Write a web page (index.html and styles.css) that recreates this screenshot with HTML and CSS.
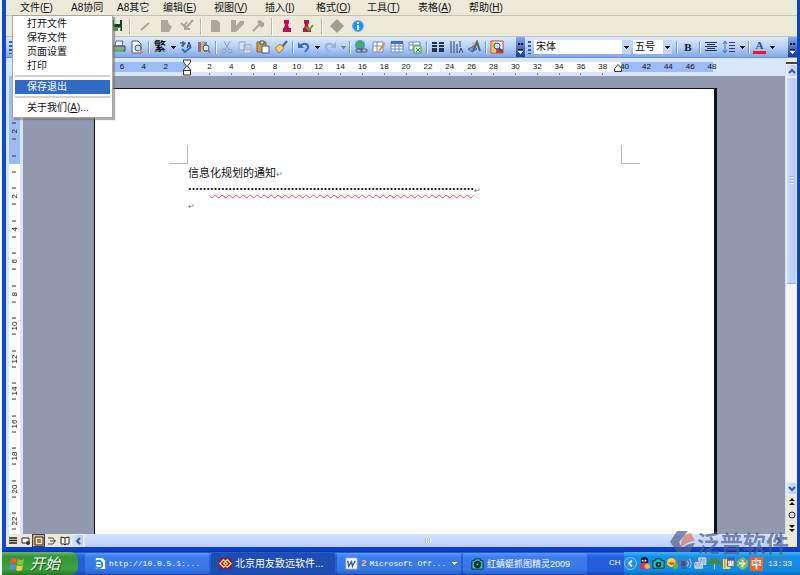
FILE: index.html
```html
<!DOCTYPE html>
<html lang="zh-CN">
<head>
<meta charset="utf-8">
<title>信息化规划的通知</title>
<link rel="stylesheet" href="styles.css">
</head>
<body>
<div class="window">
  <nav class="menubar">
    <button>文件(<u>F</u>)</button><button>A8协同</button><button>A8其它</button><button>编辑(<u>E</u>)</button><button>视图(<u>V</u>)</button><button>插入(<u>I</u>)</button><button>格式(<u>O</u>)</button><button>工具(<u>T</u>)</button><button>表格(<u>A</u>)</button><button>帮助(<u>H</u>)</button>
  </nav>
  <div class="dropdown">
    <button>打开文件</button>
    <button>保存文件</button>
    <button>页面设置</button>
    <button>打印</button>
    <hr>
    <button class="selected">保存退出</button>
    <hr>
    <button>关于我们(<u>A</u>)...</button>
  </div>

  <div class="toolbar gray-tools">
    <button aria-label="保存"><svg viewBox="0 0 14 14"><path d="M2 1h11v11H2z" fill="#173d22"/><path d="M5 1h6v4H5z" fill="#dbe8d8"/><path d="M4 8h8v4H4z" fill="#3c9950"/><path d="M9 9h2v3H9z" fill="#fff"/></svg></button>
    <i class="sep"></i>
    <button aria-label="画线"><svg viewBox="0 0 14 14"><path d="M3 11l8-7" stroke="#aaa698" stroke-width="2"/></svg></button>
    <button aria-label="文档"><svg viewBox="0 0 14 14"><path d="M2 1h7v3l4 4-3 5H2z" fill="#aaa698"/></svg></button>
    <button aria-label="修订"><svg viewBox="0 0 14 14"><path d="M13 1L6 9M5 6v4h5M1 4l3 3 3-4" fill="none" stroke="#aaa698" stroke-width="2"/></svg></button>
    <i class="sep"></i>
    <button aria-label="新建"><svg viewBox="0 0 14 14"><path d="M2 1h6l3 3v9H2z" fill="#aaa698"/></svg></button>
    <button aria-label="批注"><svg viewBox="0 0 14 14"><path d="M1 1h5v6l4-5h4v3L6 13H1z" fill="#aaa698"/></svg></button>
    <button aria-label="签名"><svg viewBox="0 0 14 14"><path d="M2 12l7-7" stroke="#aaa698" stroke-width="2"/><path d="M6 2l3-1 4 3v3l-3 2z" fill="#aaa698"/></svg></button>
    <i class="sep"></i>
    <button aria-label="盖章"><svg viewBox="0 0 14 14"><path d="M4 1h5v3L8 6l1 3h2v4H3V9h1l1-3-1-2z" fill="#c20c50"/></svg></button>
    <button aria-label="验章"><svg viewBox="0 0 14 14"><path d="M3 1h5v3L7 6l1 3h2v4H2V9h1l1-3-1-2z" fill="#c20c50"/><path d="M5 8l3 3 4-5" fill="none" stroke="#45b820" stroke-width="2"/></svg></button>
    <i class="sep"></i>
    <button aria-label="标记"><svg viewBox="0 0 14 14"><path d="M7 0l7 7-7 7-7-7z" fill="#a19d8f"/></svg></button>
    <button aria-label="信息"><svg viewBox="0 0 14 14"><circle cx="7" cy="7" r="5.500" fill="#1f91ee" stroke="#70b9f5"/><path d="M6 6h2v5H6zM6 3h2v2H6z" fill="#fff"/></svg></button>
  </div>

  <div class="toolbar blue-tools">
    <i class="grip"></i>
    <div class="tools">
      <button aria-label="打印"><svg viewBox="0 0 14 14"><path d="M4 1h7l-1 5H3z" fill="#fff" stroke="#667"/><path d="M1 6h12v5H1z" fill="#8fa0b8" stroke="#445"/><path d="M3 9h8v3H3z" fill="#5dbb55"/></svg></button>
      <button aria-label="打印预览"><svg viewBox="0 0 14 14"><path d="M2 1h6l3 3v9H2z" fill="#fff" stroke="#557"/><circle cx="8" cy="8" r="3" fill="#b9e1f7" stroke="#456"/><path d="M10 10l3 3" stroke="#d8942e" stroke-width="2"/></svg></button>
      <i class="sep"></i>
      <button class="glyph heavy">繁</button><i class="caret"></i>
      <button aria-label="拼写"><svg viewBox="0 0 14 14"><path d="M1 3h6M4 1v6M2 6l4-2M8 8l2-6 2 6M9 6h3" fill="none" stroke="#223c77"/><path d="M3 9l3 3 6-5" fill="none" stroke="#3568cc" stroke-width="2"/></svg></button>
      <button aria-label="信息检索"><svg viewBox="0 0 14 14"><path d="M1 2h3v10H1z" fill="#8a65b8"/><path d="M4 1h3v11H4z" fill="#e0b84a"/><path d="M7 2h3v10H7z" fill="#6f86ca"/><circle cx="9" cy="8" r="3" fill="#d6e9f8" stroke="#456"/><path d="M11 10l2 3" stroke="#b86c32" stroke-width="2"/></svg></button>
      <i class="sep"></i>
      <button aria-label="剪切"><svg viewBox="0 0 14 14"><path d="M4 1l5 9M10 1L5 10" stroke="#8b9cc0"/><circle cx="4" cy="11" r="2" fill="none" stroke="#8b9cc0"/><circle cx="10" cy="11" r="2" fill="none" stroke="#8b9cc0"/></svg></button>
      <button aria-label="复制"><svg viewBox="0 0 14 14"><path d="M1 2h6v8H1zM6 5h7v8H6z" fill="#d7e2f5" stroke="#93a5cb"/><path d="M8 8h4M8 10h4" stroke="#93a5cb"/></svg></button>
      <button aria-label="粘贴"><svg viewBox="0 0 14 14"><path d="M1 2h9v10H1z" fill="#d99c35" stroke="#84602c"/><path d="M4 1h4v3H4z" fill="#ddd" stroke="#555"/><path d="M6 6h7v7H6z" fill="#fff" stroke="#345a9d"/></svg></button>
      <button aria-label="格式刷"><svg viewBox="0 0 14 14"><path d="M13 1L8 7" stroke="#56618b" stroke-width="2"/><path d="M6 4l4 4-5 5-4-5z" fill="#f4d568" stroke="#a78437"/></svg></button>
      <i class="sep"></i>
      <button aria-label="撤销"><svg viewBox="0 0 14 14"><path d="M3 6c4-4 9-2 8 2l-3 4" fill="none" stroke="#326ad0" stroke-width="2"/><path d="M1 2v6h6z" fill="#326ad0"/></svg></button><i class="caret"></i>
      <button aria-label="重做"><svg viewBox="0 0 14 14"><path d="M11 6C7 2 2 4 3 8l3 4" fill="none" stroke="#9cb0d7" stroke-width="2"/><path d="M13 2v6H7z" fill="#9cb0d7"/></svg></button><i class="caret dim"></i>
      <i class="sep"></i>
      <button aria-label="超链接"><svg viewBox="0 0 14 14"><circle cx="6" cy="5" r="5" fill="#3f9acb"/><path d="M3 2l4-1 2 3-3 4-2-1z" fill="#50ad42"/><rect x="2" y="9" width="6" height="3" rx="1" fill="none" stroke="#556"/><rect x="7" y="9" width="6" height="3" rx="1" fill="none" stroke="#556"/></svg></button>
      <button aria-label="表格和边框"><svg viewBox="0 0 14 14"><path d="M1 2h10v10H1zM1 6h10M5 2v10" fill="#fff" stroke="#7a86a8"/><path d="M13 3l-6 8" stroke="#d69a25" stroke-width="2"/></svg></button>
      <button aria-label="插入表格"><svg viewBox="0 0 14 14"><path d="M1 2h12v10H1zM1 6h12M1 9h12M5 3v9M9 3v9" fill="#fff" stroke="#698bc5"/><path d="M1 1h12v3H1z" fill="#3f70c2"/></svg></button>
      <button aria-label="插入工作表"><svg viewBox="0 0 14 14"><path d="M1 2h11v8H1zM1 5h11M5 2v8" fill="#fff" stroke="#698bc5"/><path d="M6 6h7v7H6z" fill="#dff0dc" stroke="#4b9b48"/><path d="M8 8l4 4m0-4l-4 4" stroke="#308535"/></svg></button>
      <i class="sep"></i>
      <button aria-label="分栏"><svg viewBox="0 0 14 14"><path d="M1 3h5M8 3h5M1 6h5M8 6h5M1 9h5M8 9h5M1 11h5M8 11h5" stroke="#25304c" stroke-width="2"/></svg></button>
      <button aria-label="文字方向"><svg viewBox="0 0 14 14"><path d="M2 1v12M5 1v12M8 4v9M11 1v6M10 13l2-5 2 5" fill="none" stroke="#304164"/></svg></button>
      <button aria-label="绘图"><svg viewBox="0 0 14 14"><path d="M5 2h6v6H5z" fill="#e0bd68"/><path d="M1 9l6-3 3 3-5 3z" fill="#869bce" stroke="#536492"/><path d="M6 11l4-9 3 9" fill="none" stroke="#4b5e94" stroke-width="2"/></svg></button>
      <i class="sep"></i>
      <button aria-label="文档结构图"><svg viewBox="0 0 14 14"><path d="M1 1h12v12H1z" fill="#fff" stroke="#c33a24"/><path d="M2 2h4v10H2z" fill="#f4cd31"/><path d="M6 9h7v4H6z" fill="#db3930"/><circle cx="7" cy="6" r="3" fill="#cbe3f6" stroke="#2755a1"/><path d="M9 8l3 4" stroke="#2755a1" stroke-width="2"/></svg></button>
    </div>
    <i class="cap"></i>
    <i class="grip"></i>
    <div class="format">
      <select class="family" aria-label="字体"><option>宋体</option></select>
      <select class="size" aria-label="字号"><option>五号</option></select>
      <i class="sep"></i>
      <button class="glyph bold">B</button>
      <i class="sep"></i>
      <button aria-label="居中"><svg viewBox="0 0 14 14"><path d="M1 2.500h12M3 4.500h8M1 6.500h12M3 8.500h8M1 10.500h12" stroke="#26324c"/></svg></button>
      <button aria-label="行距"><svg viewBox="0 0 14 14"><path d="M3 2v10M1 4l2-3 2 3M1 10l2 3 2-3" fill="none" stroke="#3c6fc8"/><path d="M7 2.500h6M7 5.500h6M7 8.500h6M7 11.500h6" stroke="#34415d"/></svg></button><i class="caret"></i>
      <i class="sep"></i>
      <button class="glyph color">A</button><i class="caret"></i>
    </div>
    <i class="cap"></i>
  </div>

  <div class="main">
    <div class="work">
      <div class="hruler">
        <div class="scale">
          <span>6</span><span>4</span><span>2</span>
          <span class="indent"><svg viewBox="0 0 10 17"><path d="M1.500 1h7v2l-3 4 3 4v5h-7v-5l3-4-3-4zM1.500 11.500h7" fill="#fffdf2" stroke="#333"/></svg></span>
          <span>2</span><span>4</span><span>6</span><span>8</span><span>10</span><span>12</span><span>14</span><span>16</span><span>18</span><span>20</span><span>22</span><span>24</span><span>26</span><span>28</span><span>30</span><span>32</span><span>34</span><span>36</span><span>38</span><span class="right-indent"><svg viewBox="0 0 8 8"><path d="M.5 7.500v-3l3.500-4 3.500 4v3z" fill="#fffdf2" stroke="#333"/></svg>40</span><span>42</span><span>44</span><span>46</span><span>48</span>
        </div>
      </div>
      <div class="canvas">
        <div class="vruler">
          <div class="vscale"><span>2</span><span></span><span>2</span><span>4</span><span>6</span><span>8</span><span>10</span><span>12</span><span>14</span><span>16</span><span>18</span><span>20</span><span>22</span></div>
        </div>
        <main class="page">
          <div class="crops"><i class="crop left"></i><i class="crop right"></i></div>
          <article class="text">
            <p>信息化规划的通知<span class="mark">↵</span></p>
            <p><b>……<span class="squiggle">………………………………………………………………</span></b><span class="mark">↵</span></p>
            <p><span class="mark">↵</span></p>
          </article>
        </main>
      </div>
    </div>
    <div class="vscroll">
      <i class="split"></i>
      <button class="arrow" aria-label="向上"><svg viewBox="0 0 10 10"><path d="M2 7l3-3 3 3" fill="none" stroke="#40598f" stroke-width="2"/></svg></button>
      <div class="vtrack"><i class="vthumb"></i></div>
      <button class="arrow" aria-label="向下"><svg viewBox="0 0 10 10"><path d="M2 3l3 3 3-3" fill="none" stroke="#40598f" stroke-width="2"/></svg></button>
      <button class="browse" aria-label="前一页"><svg viewBox="0 0 10 10"><path d="M5 1l3 3H2zM5 5l3 3H2z" fill="#111"/></svg></button>
      <button class="browse" aria-label="选择浏览对象"><svg viewBox="0 0 10 10"><circle cx="5" cy="5" r="3" fill="#ddd" stroke="#222"/></svg></button>
      <button class="browse" aria-label="下一页"><svg viewBox="0 0 10 10"><path d="M5 5L2 2h6zM5 9L2 6h6z" fill="#111"/></svg></button>
    </div>
  </div>

  <div class="bottom">
    <button aria-label="普通视图"><svg viewBox="0 0 10 10"><path d="M1 2h8M1 4.500h8M1 7h8" stroke="#222" stroke-width="1.500"/></svg></button>
    <button aria-label="Web 版式"><svg viewBox="0 0 10 10"><path d="M1 2h7v5H1z" fill="#fff" stroke="#222"/><circle cx="7" cy="7" r="2" fill="#333"/></svg></button>
    <button class="current" aria-label="页面视图"><svg viewBox="0 0 10 10"><path d="M1 1h8v8H1zM3 4h4M3 6h4" fill="#ffe1b0" stroke="#222"/></svg></button>
    <button aria-label="大纲视图"><svg viewBox="0 0 10 10"><path d="M1 2h5M3 5h6M1 8h5M6 2l2 3-2 3" fill="none" stroke="#444"/></svg></button>
    <button aria-label="阅读版式"><svg viewBox="0 0 10 10"><path d="M1 1l4 1 4-1v7H6L5 9 4 8H1zM5 2v6" fill="#fff" stroke="#222"/></svg></button>
    <button class="arrow" aria-label="向左"><svg viewBox="0 0 10 10"><path d="M7 2L4 5l3 3" fill="none" stroke="#40598f" stroke-width="2"/></svg></button>
    <i class="hthumb"></i>
    <button class="arrow" aria-label="向右"><svg viewBox="0 0 10 10"><path d="M3 2l3 3-3 3" fill="none" stroke="#40598f" stroke-width="2"/></svg></button>
    <i class="corner"></i>
  </div>
</div>

<footer class="taskbar">
  <button class="start"><svg viewBox="0 0 16 16"><path d="M2 3q3-2 6 0L7 8Q4 6 1 8z" fill="#ef5b28"/><path d="M9 3q3 2 6 0l-1 5q-3 2-6 0z" fill="#83c93c"/><path d="M1 9q3-2 6 0l-1 5q-3-2-6 0z" fill="#4a91f0"/><path d="M8 9q3 2 6 0l-1 5q-3 2-6 0z" fill="#f8cb32"/></svg>开始</button>
  <button class="task mono"><svg viewBox="0 0 14 14"><path d="M3 1h7l3 3v9H3z" fill="#fff"/><circle cx="6" cy="8" r="4" fill="none" stroke="#2687df" stroke-width="2"/><path d="M2 8h8" stroke="#2687df"/></svg>http://10.0.5.1:...</button>
  <button class="task active"><svg viewBox="0 0 14 14"><path d="M0 1h14v12H0z" fill="#7c176f"/><path d="M1 7l4-4 4 4-4 4zM5 7l4-4 4 4-4 4z" fill="none" stroke="#ffd32f" stroke-width="1.500"/></svg>北京用友致远软件...</button>
  <button class="task mono"><svg viewBox="0 0 14 14"><path d="M1 1h12v12H1z" fill="#fff" stroke="#9caacb"/><path d="M3 4l1 6 3-5 1 5 3-6" fill="none" stroke="#2f58a7" stroke-width="1.500"/></svg><em>2</em>Microsoft Off...<i class="caret white"></i></button>
  <button class="task small"><svg viewBox="0 0 14 14"><path d="M1 4h3V2h6v2h3v9H1z" fill="#20d5bd" stroke="#06272c"/><circle cx="7" cy="8" r="3.500" fill="#102d30" stroke="#071519"/><circle cx="7" cy="8" r="1" fill="#54e3ca"/></svg>红蜻蜓抓图精灵2009</button>
  <span class="lang">CH</span>
  <div class="tray">
    <svg viewBox="0 0 14 14"><circle cx="7" cy="7" r="6.500" fill="#278eed" stroke="#8cc9ff"/><path d="M8.500 4l-3 3 3 3" fill="none" stroke="#fff" stroke-width="2"/></svg>
    <svg viewBox="0 0 14 14"><circle cx="7" cy="4" r="4" fill="#251b2c"/><path d="M2 8q5-4 10 0v5H2z" fill="#e12f5e"/><circle cx="5" cy="4" r="1" fill="#fff"/><circle cx="8" cy="4" r="1" fill="#fff"/><circle cx="10" cy="10" r="3" fill="#f5b04a"/></svg>
    <svg viewBox="0 0 14 14"><path d="M1 4h3V2h6v2h3v8H1z" fill="#1bc6b1" stroke="#062b31"/><circle cx="7" cy="8" r="3" fill="#092d32"/><circle cx="7" cy="8" r="1" fill="#54e3ca"/></svg>
    <svg viewBox="0 0 14 14"><circle cx="6" cy="6" r="5" fill="#ffd237"/><path d="M2 6q4 5 8 0" fill="#e44b2a"/><circle cx="10" cy="10" r="3" fill="#69b93d"/></svg>
    <svg viewBox="0 0 14 14"><path d="M1 4h5v6H1zM2 11h4v2H2z" fill="#434d79"/><path d="M8 4q2 3 0 6M10 2q4 5 0 10" fill="none" stroke="#c9dfff"/></svg>
    <svg viewBox="0 0 14 14"><path d="M5 1h8v7H5zM1 6h8v6H1z" fill="#8fc5f3" stroke="#e0edff"/></svg>
    <svg viewBox="0 0 14 14"><path d="M0 8q1-7 7-7t7 7l-4-1-3 1-3-1z" fill="#269443"/><path d="M7 7v6" stroke="#d8e8d5"/></svg>
    <svg viewBox="0 0 14 14"><path d="M1 2h8v11H1z" fill="#f6da43"/><path d="M6 1h7v9H6z" fill="#fff" stroke="#315cae"/><path d="M6 1h7v3H6z" fill="#315cae"/></svg>
    <svg viewBox="0 0 14 14"><path d="M7 0l6 4v6l-6 4-6-4V4z" fill="#71c54a"/><path d="M7 3v8M3 7h8" stroke="#fff" stroke-width="2"/></svg>
    <span class="ime">中</span>
    <time>13:33</time>
  </div>
</footer>

<div class="watermark">
  <svg viewBox="0 0 26 24"><path d="M7 1h11L9 12l5 10H7L0 12z" fill="#4d5f8a"/><path d="M11 13Q13 3 21 3l4 8q-8 0-14 7z" fill="#d8785e"/><path d="M11 20q5-7 14-7l-5 9h-8z" fill="#4d5f8a"/></svg>
  <strong>泛普软件</strong>
  <small>www.fanpusoft.com</small>
</div>
</body>
</html>
```

FILE: styles.css
```css
* { box-sizing: border-box; }

body {
  margin: 0;
  height: 100vh;
  display: flex;
  flex-direction: column;
  overflow: hidden;
  position: relative;
  background: #f4f6fc;
  color: #111;
  font: 10px/14px "Liberation Sans", "Noto Sans CJK SC", sans-serif;
  padding-left: 2px;
}

button {
  margin: 0;
  padding: 0;
  border: 0;
  background: none;
  color: inherit;
  font: inherit;
  white-space: nowrap;
}

svg { display: block; flex: none; }

.window {
  flex: 1;
  min-height: 0;
  display: flex;
  flex-direction: column;
  position: relative;
  border-left: 4px solid #0a49dc;
  border-right: 3px solid #0a43c8;
  border-bottom: 4px solid #0a3fca;
  background: #ece9d8;
}

/* Menus */
.menubar {
  height: 16px;
  display: grid;
  grid-template-columns: 51px 46px 46px repeat(7, 51px);
  padding-left: 14px;
  border-bottom: 1px solid #c5c2b2;
}
.menubar button { text-align: left; }

.dropdown {
  position: absolute;
  z-index: 2;
  top: 15px;
  left: 6px;
  width: 101px;
  padding: 1px 2px 2px;
  display: flex;
  flex-direction: column;
  background: #fff;
  border: 1px solid #aaa799;
  box-shadow: 2px 2px 1px #77777799;
}
.dropdown button { height: 14px; padding-left: 12px; text-align: left; }
.dropdown hr { width: 100%; height: 2px; margin: 2px 0 3px; border: 0; background: #d4d2c8; }
.dropdown .selected { background: #316ac5; color: #fff; }

/* Toolbars */
.toolbar { display: flex; align-items: center; flex: none; }
.toolbar svg { width: 14px; height: 14px; margin: auto; }
.gray-tools { height: 21px; padding-left: 99px; border-bottom: 1px solid #c5c2b2; }
.gray-tools button { width: 21px; }
.gray-tools .sep { width: 8px; height: 17px; background: linear-gradient(90deg, transparent 3px, #bdb9a9 3px 4px, #fff 4px 5px, transparent 5px); }

.blue-tools { height: 21px; background: linear-gradient(#dce9fd, #b6d0f8 50%, #83a8e6); border-bottom: 1px solid #6d8fca; }
.tools, .format { display: flex; align-items: center; }
.tools { padding-left: 95px; flex: 1; }
.tools button, .format button { width: 18px; }
.blue-tools .sep { width: 5px; height: 13px; background: linear-gradient(90deg, transparent 2px, #7197d8 2px 3px, #eef5ff 3px 4px, transparent 4px); }
.grip { width: 3px; height: 13px; margin: 0 3px; background: repeating-linear-gradient(#37578f 0 2px, transparent 2px 4px); }
.caret { width: 8px; height: 3px; background: linear-gradient(#111, #111) 50% 0 / 5px 1px no-repeat, linear-gradient(#111, #111) 50% 1px / 3px 1px no-repeat, linear-gradient(#111, #111) 50% 2px / 1px 1px no-repeat; }
.dim { opacity: .4; }
.white { filter: invert(1); margin-left: auto; }
.cap { width: 9px; height: 20px; background: linear-gradient(#fff, #fff) 50% 14px / 5px 1px no-repeat, linear-gradient(#fff, #fff) 50% 15px / 3px 1px no-repeat, linear-gradient(#fff, #fff) 50% 16px / 1px 1px no-repeat, linear-gradient(#111, #111) 50% 12px / 5px 1px no-repeat, linear-gradient(90deg, #111 2px, transparent 2px 3px, #111 3px) 50% 6px / 5px 2px no-repeat, linear-gradient(#88aded, #123d99); }
.glyph { font-size: 11px; }
.glyph.heavy { font-size: 12px; font-weight: bold; }
.glyph.bold { font-family: "Liberation Serif", serif; font-weight: bold; }
.glyph.color { line-height: 11px; border-bottom: 3px solid #f21818; color: #264b96; font-family: "Liberation Serif", serif; font-weight: bold; }
.format { padding-right: 12px; }
.format .color { width: 13px; margin: 0 2px; }
select {
  appearance: none;
  height: 14px;
  margin: 0 2px 0 0;
  padding: 0 0 0 2px;
  border: 0;
  border-radius: 0;
  color: #111;
  font: inherit;
  background: linear-gradient(#111, #111) right 2px top 6px / 5px 1px no-repeat, linear-gradient(#111, #111) right 3px top 7px / 3px 1px no-repeat, linear-gradient(#111, #111) right 4px top 8px / 1px 1px no-repeat, linear-gradient(#c1d6f8, #c1d6f8) right / 9px 100% no-repeat, #fff;
}
.family { width: 97px; }
.size { width: 39px; }

/* Document area */
.main { flex: 1; min-height: 0; display: flex; }
.work { flex: 1; min-width: 0; display: flex; flex-direction: column; }
.hruler { height: 18px; flex: none; padding: 4px 0 0 14px; background: #d8e6fc; overflow: hidden; }
.scale {
  width: 703px;
  height: 14px;
  padding-left: 91px;
  display: grid;
  grid-template-columns: repeat(28, 1fr);
  background: linear-gradient(90deg, #9dbcf3 167px, #fff 167px 601px, #9dbcf3 601px 693px, #d8e6fc 693px) top / 100% 10px no-repeat;
  font-size: 8px;
  line-height: 10px;
  text-align: center;
}
.scale span:nth-child(n+5):nth-child(-n+23) { background: linear-gradient(#7787a5, #7787a5) 50% 11px / 1px 2px no-repeat; }
.indent svg { width: 10px; height: 17px; margin: -3px auto 0; }
.right-indent { position: relative; }
.right-indent svg { position: absolute; left: 0; top: 2px; width: 8px; height: 8px; }

.canvas { flex: 1; min-height: 0; display: flex; background: #9099ae; overflow: hidden; }
.vruler {
  flex: none;
  width: 17px;
  padding: 39px 0 0 3px;
  overflow: hidden;
  background: linear-gradient(#9dbcf3 88px, #fff 88px) 3px 0 / 11px 100% no-repeat, #d8e6fc;
}
.vscale { width: 11px; height: 423px; display: grid; grid-template-rows: repeat(13, 1fr); font-size: 8px; line-height: 11px; }
.vscale span {
  writing-mode: vertical-rl;
  transform: rotate(180deg);
  text-align: center;
  background: linear-gradient(#333, #333) 50% 25% / 4px 1px no-repeat, linear-gradient(#333, #333) 50% 75% / 4px 1px no-repeat;
}
.page { flex: 1; margin: 12px 68px 0 71px; background: #fff; border: solid #111; border-width: 1px 3px 0 1px; }
.crops { display: flex; justify-content: space-between; padding: 56px 74px 0 74px; }
.crop { width: 19px; height: 19px; border: 0 solid #b8b8b8; border-bottom-width: 1px; }
.left { border-right-width: 1px; }
.right { border-left-width: 1px; }
.text { padding-left: 93px; font: 11px/16px "Noto Sans CJK SC", sans-serif; }
.text p { margin: 0; height: 16px; white-space: nowrap; }
.text b { font-weight: 900; color: #000; }
.squiggle { text-decoration: underline wavy #ff4b4b 1px; text-underline-offset: 1px; }
.mark { font-size: 8px; line-height: 8px; color: #777; }

/* Scroll bars */
.vscroll { width: 12px; flex: none; display: flex; flex-direction: column; background: #f5f4ee; border-left: 1px solid #d5dbe8; }
.split { height: 6px; border-bottom: 2px solid #44433f; background: #ece9d8; }
.arrow { background: linear-gradient(90deg, #d8e3ff, #b8ccfa); border: 1px solid #e8efff; border-radius: 2px; }
.vscroll .arrow { height: 13px; }
.vscroll svg, .bottom svg { width: 10px; height: 10px; margin: auto; }
.vtrack { flex: 1; }
.vthumb {
  display: block;
  height: 51%;
  border: 1px solid #edf3ff;
  border-bottom-color: #9eb5de;
  border-radius: 2px;
  background: repeating-linear-gradient(#9bb3e6 0 1px, #e7eeff 1px 2px, transparent 2px 3px) center / 5px 8px no-repeat, linear-gradient(90deg, #cad9ff, #b6cafa);
}
.browse { height: 13px; background: #ece9d8; }

.bottom { height: 13px; flex: none; display: flex; background: #ece9d8; }
.bottom button { width: 13px; }
.bottom .current { background: #f7b05f; border: 1px solid #28438c; }
.hthumb {
  flex: 1;
  margin: 0 1px;
  border-radius: 2px;
  background: repeating-linear-gradient(90deg, #a2b7e6 0 1px, #edf3ff 1px 2px) center / 6px 5px no-repeat, linear-gradient(#d5e1ff, #bdcffc);
}
.corner { width: 12px; }

/* Taskbar */
.taskbar {
  height: 24px;
  flex: none;
  display: flex;
  align-items: stretch;
  color: #fff;
  background: linear-gradient(#0832aa 1px, #3c86ef 2px, #245edb 6px, #245edb 80%, #1747af);
}
.start {
  width: 76px;
  margin: 1px 6px 0 0;
  display: flex;
  align-items: center;
  gap: 5px;
  padding-left: 7px;
  border-radius: 0 8px 8px 0;
  background: linear-gradient(#68b868, #359537 20%, #3ca43d 75%, #267528);
  font-size: 15px;
  font-style: italic;
  text-shadow: 1px 1px 1px #174d19;
}
.start svg { width: 16px; height: 16px; }
.task {
  flex: 0 1 124px;
  min-width: 0;
  margin: 2px 1px 1px;
  padding: 0 3px 0 8px;
  display: flex;
  align-items: center;
  gap: 3px;
  border-radius: 2px;
  background: linear-gradient(#5a9bf6, #3b7cee 20%, #3776e6 80%, #2b62cc);
}
.task svg { width: 13px; height: 13px; }
.task.active { background: #1d4daf; }
.task em { color: #ffc65c; font-size: 9px; font-style: normal; font-weight: bold; }
.mono { font: 8px/14px "Liberation Mono", monospace; }
.small { font-size: 9px; }
.lang { margin-left: auto; width: 15px; line-height: 23px; font-size: 8px; }
.tray {
  width: 176px;
  margin-top: 1px;
  display: flex;
  align-items: center;
  gap: 1px;
  background: linear-gradient(#43b4f8, #1590e7 20%, #118ae1 80%, #0b69bb);
}
.tray svg { width: 13px; height: 13px; }
.ime { width: 13px; background: #ed642a; font-size: 11px; font-weight: bold; text-align: center; }
time { margin-left: auto; padding-right: 8px; font: 8px/14px "Liberation Mono", monospace; }

.watermark {
  position: absolute;
  z-index: 1;
  right: 11px;
  bottom: 7px;
  display: grid;
  grid-template-columns: 26px auto;
  column-gap: 1px;
  opacity: .7;
  color: #4d5f8a;
}
.watermark svg { width: 26px; height: 24px; }
.watermark strong { font: bold 23px/24px "Noto Sans CJK SC", sans-serif; }
.watermark small { grid-column: 1 / 3; padding-left: 4px; font-size: 13px; line-height: 14px; color: #a45c65; opacity: .7; }
```
